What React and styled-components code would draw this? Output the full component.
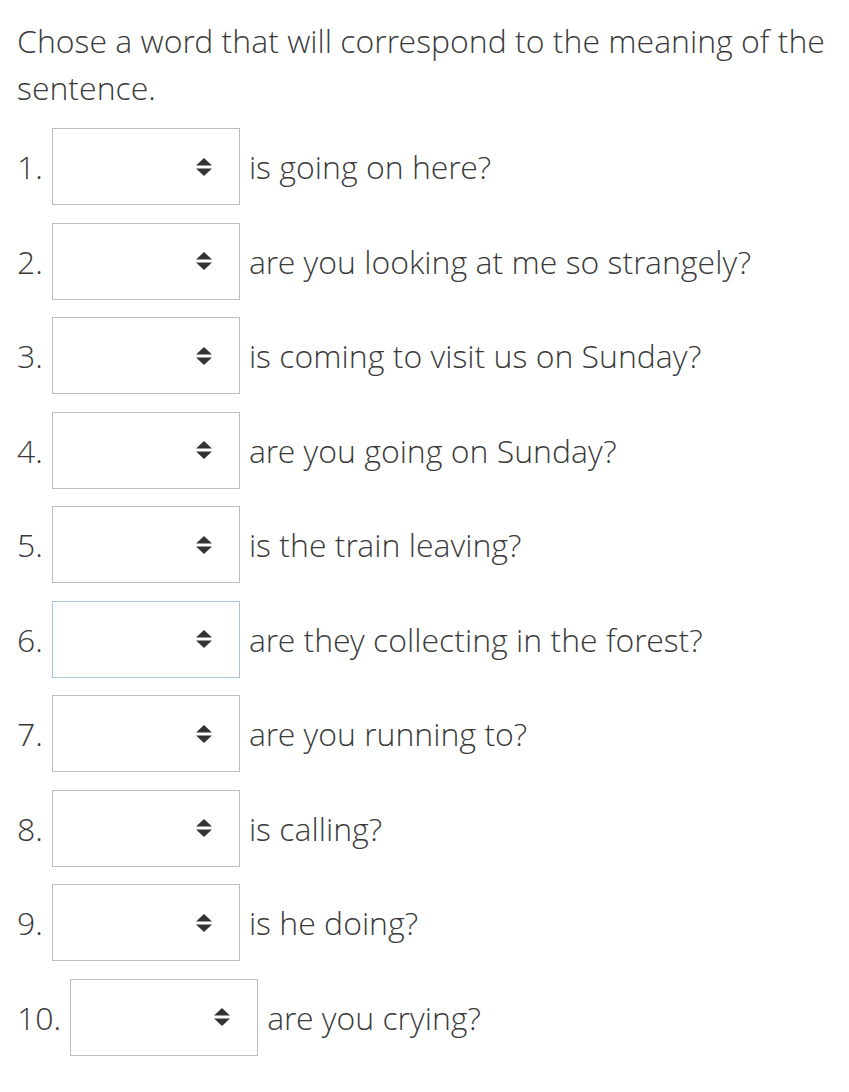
import React from 'react'
import styled, { createGlobalStyle } from 'styled-components'

const Global = createGlobalStyle`
    body {
        margin: 0;
        background: #ffffff;
        font-family: "Open Sans Light", "Open Sans", "Liberation Sans", sans-serif;
        font-weight: 300;
        color: #3a3a3a;
    }
`

const Page = styled.main`
    padding: 17px 17px 0 17px;
`

const Title = styled.p`
    margin: 0 0 17px 0;
    font-size: 32px;
    line-height: 47px;
    font-weight: 300;
`

const List = styled.div`
    display: flex;
    flex-direction: column;
    gap: 17.5px;
`

const Row = styled.div`
    display: flex;
    align-items: center;
    font-size: 32px;
`

const Num = styled.span`
    margin-right: 9px;
`

const Select = styled.div`
    box-sizing: border-box;
    width: 188px;
    height: 77px;
    border: 1.5px solid ${(p) => (p.focused ? '#a3c6da' : '#bdbdbd')};
    display: flex;
    align-items: center;
    justify-content: flex-end;
    padding-right: 26px;
    margin-right: 9px;
    background: #fff;
`

const Arrows = () => (
    <svg width="18" height="20" viewBox="0 0 18 20">
        <path d="M9 1 L17 8.5 H1 Z" fill="#333" />
        <path d="M1 11.5 H17 L9 19 Z" fill="#333" />
    </svg>
)

const items = [
    'is going on here?',
    'are you looking at me so strangely?',
    'is coming to visit us on Sunday?',
    'are you going on Sunday?',
    'is the train leaving?',
    'are they collecting in the forest?',
    'are you running to?',
    'is calling?',
    'is he doing?',
    'are you crying?',
]

const App = () => {
    return (
        <Page>
            <Global />
            <Title>Chose a word that will correspond to the meaning of the sentence.</Title>
            <List>
                {items.map((text, i) => (
                    <Row key={i}>
                        <Num>{i + 1}.</Num>
                        <Select focused={i === 5}>
                            <Arrows />
                        </Select>
                        <span>{text}</span>
                    </Row>
                ))}
            </List>
        </Page>
    )
}

export default App
